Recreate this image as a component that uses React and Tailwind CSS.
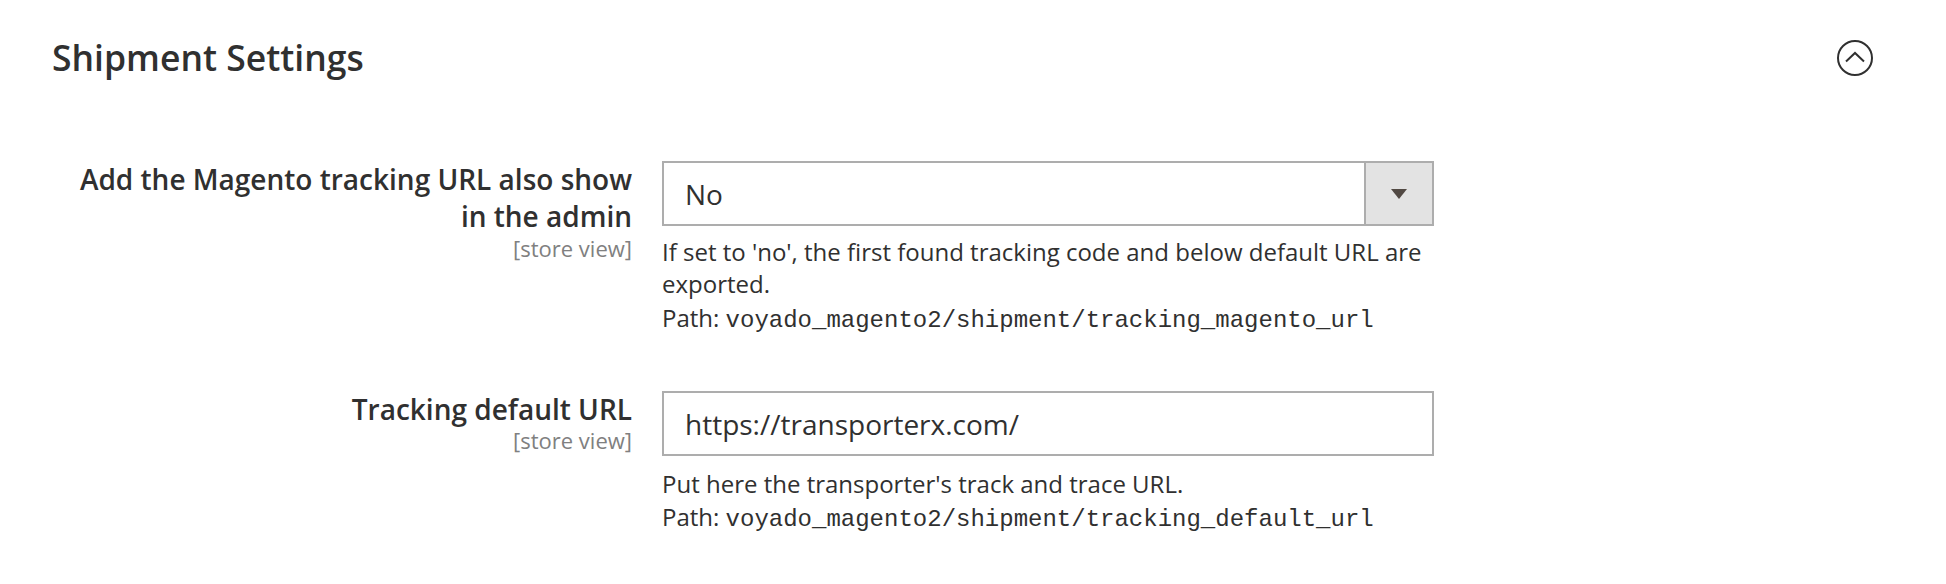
export default function App() {
  const font = { fontFamily: '"Open Sans", "Liberation Sans", sans-serif' };
  const mono = { fontFamily: '"Liberation Mono", "Courier New", monospace' };
  return (
    <div className="w-[1946px] h-[584px] bg-white text-[#303030] overflow-hidden" style={font}>
      <div className="flex items-center justify-between pl-[52px] pr-[72px] pt-[37px] h-[77px]">
        <h2 className="text-[35.5px] leading-[40px] font-semibold text-[#303030]">Shipment Settings</h2>
        <svg width="38" height="38" viewBox="0 0 38 38" className="mt-[2px]">
          <circle cx="19" cy="19" r="17" fill="none" stroke="#303030" strokeWidth="2" />
          <path d="M10 22.5 L19 14 L28 22.5" fill="none" stroke="#303030" strokeWidth="2" />
        </svg>
      </div>

      <div className="mt-[84px] flex flex-col gap-[53px]">
        <div className="flex gap-[30px]">
          <div className="w-[632px] text-right pl-[70px]">
            <div className="text-[28px] leading-[37px] font-semibold">Add the Magento tracking URL also show in the admin</div>
            <div className="text-[22px] leading-[27px] text-[#808080]">[store view]</div>
          </div>
          <div className="w-[772px]">
            <div className="flex h-[65px] border-2 border-[#adadad] bg-white">
              <div className="flex-1 flex items-center pl-[21px] text-[28px]">No</div>
              <div className="w-[68px] bg-[#e3e3e3] border-l-2 border-[#adadad] flex items-center justify-center">
                <svg width="16" height="10" viewBox="0 0 16 10"><path d="M0 0 H16 L8 10 Z" fill="#514943" /></svg>
              </div>
            </div>
            <div className="mt-[10px] text-[24px] leading-[32px]">If set to 'no', the first found tracking code and below default URL are exported.</div>
            <div className="text-[24px] leading-[35px]">Path: <code className="text-[24px]" style={mono}>voyado_magento2/shipment/tracking_magento_url</code></div>
          </div>
        </div>

        <div className="flex gap-[30px]">
          <div className="w-[632px] text-right pl-[70px]">
            <div className="text-[28px] leading-[37px] font-semibold">Tracking default URL</div>
            <div className="text-[22px] leading-[25px] text-[#808080]">[store view]</div>
          </div>
          <div className="w-[772px]">
            <div className="flex items-center h-[65px] border-2 border-[#adadad] bg-white pl-[21px] text-[28px]">https://transporterx.com/</div>
            <div className="mt-[12px] text-[24px] leading-[32px]">Put here the transporter's track and trace URL.</div>
            <div className="text-[24px] leading-[34px]">Path: <code className="text-[24px]" style={mono}>voyado_magento2/shipment/tracking_default_url</code></div>
          </div>
        </div>
      </div>
    </div>
  );
}
